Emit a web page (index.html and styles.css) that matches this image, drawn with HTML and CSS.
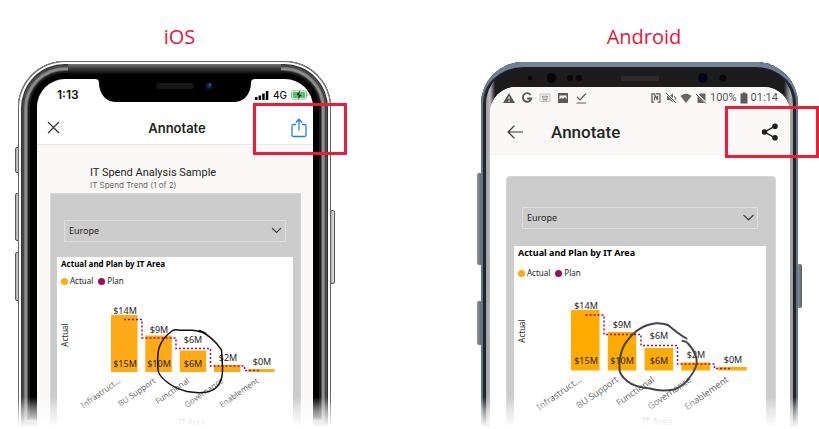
FILE: index.html
```html
<!DOCTYPE html>
<html lang="en">
<head>
<meta charset="utf-8">
<title>Annotate and share</title>
<link rel="stylesheet" href="styles.css">
</head>
<body>
<main class="stage">

  <section class="device ios">
    <h2 class="platform">iOS</h2>
    <div class="phone">
      <i class="key key-left k1"></i><i class="key key-left k2"></i><i class="key key-left k3"></i><i class="key key-right"></i>
      <div class="frame">
        <div class="screen">
          <svg class="notch" width="160" height="26" viewBox="0 0 160 26" aria-hidden="true">
            <path d="M0 0H160V3Q156 3 156 7A16 19 0 0 1 140 26H20A16 19 0 0 1 4 7Q4 3 0 3Z" fill="#000"/>
            <rect x="61" y="7" width="38" height="6" rx="3" fill="#161616"/>
            <circle cx="114" cy="10" r="4" fill="#0c1220"/><circle cx="114" cy="10" r="2" fill="#16305e"/><circle cx="115" cy="8.500" r="1" fill="#4a6fae"/>
          </svg>
          <div class="status">
            <span class="clock">1:13</span>
            <span class="indicators">
              <svg width="14" height="9" viewBox="0 0 14 9" aria-hidden="true"><path d="M0 6h2.500v3H0zM3.600 4.500h2.500V9H3.600zM7.200 2.500h2.500V9H7.200zM10.800 0h2.500v9h-2.500z"/></svg>
              <span>4G</span>
              <svg width="18" height="10" viewBox="0 0 18 10" aria-hidden="true"><rect x=".5" y=".8" width="15" height="8.400" rx="2" fill="#fff" stroke="#a5a5a5"/><rect x="1.800" y="2" width="12.400" height="6" rx="1" fill="#34d158"/><path d="M16.500 3.500v3q1-.4 1-1.500t-1-1.500" fill="#999"/><path d="M9.500 0 4.500 5.500h3L6.500 10l5-5.500h-3z" fill="#000" stroke="#fff" stroke-width=".4"/></svg>
            </span>
          </div>
          <header class="bar">
            <button class="icon" type="button" aria-label="Close"><svg width="13" height="13" viewBox="0 0 13 13"><path d="M1 1l11 11M12 1 1 12" fill="none" stroke="#333" stroke-width="1.200"/></svg></button>
            <h1>Annotate</h1>
            <button class="icon share" type="button" aria-label="Share"><svg width="16" height="20" viewBox="0 0 16 20"><path d="M5 6.500H2.500Q1 6.500 1 8v9q0 1.500 1.500 1.500h11q1.500 0 1.500-1.500V8q0-1.500-1.500-1.500H11M8 12.500V1.500M4.800 4.500 8 1.200l3.200 3.300" fill="none" stroke="#2b80cc" stroke-width="1.300"/></svg></button>
          </header>
          <div class="content">
            <div class="caption"><p class="name">IT Spend Analysis Sample</p><p class="page">IT Spend Trend (1 of 2)</p></div>
            <div class="report">
              <div class="picker">
                <select aria-label="Region"><option>Europe</option></select>
                <svg width="11" height="7" viewBox="0 0 11 7" aria-hidden="true"><path d="M1 1l4.500 4.500L10 1" fill="none" stroke="#444" stroke-width="1.100"/></svg>
              </div>
              <article class="visual">
                <h3>Actual and Plan by IT Area</h3>
                <ul class="legend"><li class="actual">Actual</li><li class="plan">Plan</li></ul>
                <svg class="chart" viewBox="57 290 236 139">
                  <path class="bars" d="M111 315h26.500v57H111zM145.300 335.500h26.500V372h-26.500zM179.700 350.500h26.500V372h-26.500zM214 365h26.500v7H214zM248.200 369h26.500v3h-26.500z"/>
                  <path class="line" d="M124 319.500h18V338h34v10.500h34.500V366h34v4.500H260"/>
                  <g class="values">
                    <text x="125" y="314">$14M</text><text x="159" y="333">$9M</text><text x="193" y="343">$6M</text><text x="228" y="361">$2M</text><text x="262" y="365">$0M</text>
                    <text x="125" y="367">$15M</text><text x="159" y="367">$10M</text><text x="193" y="367">$6M</text>
                    <text class="axis" transform="translate(68 335) rotate(-90)">Actual</text>
                  </g>
                  <g class="areas">
                    <text transform="translate(121 382) rotate(-35)">Infrastruct...</text><text transform="translate(156 382) rotate(-35)">BU Support</text><text transform="translate(190 382) rotate(-35)">Functional</text><text transform="translate(224 382) rotate(-35)">Governance</text><text transform="translate(259 382) rotate(-35)">Enablement</text>
                    <text x="205" y="426">IT Area</text>
                  </g>
                  <path class="ink" d="M206 333.500L199.500 330.500L201 332Q196 330.500 192 330.300T180 330.300Q175 328.800 172 331Q162 338 159 348Q157 355 158 370Q159 376 167 382Q174 388 187 391.500Q198 393.500 207 392Q216 390 219 384Q223 378 222.500 367T221.500 350Q213 337 200 331"/>
                </svg>
              </article>
            </div>
          </div>
        </div>
      </div>
      <i class="highlight"></i>
    </div>
  </section>

  <section class="device android">
    <h2 class="platform">Android</h2>
    <div class="phone">
      <i class="key key-left k1"></i><i class="key key-left k2"></i><i class="key key-right"></i>
      <div class="frame">
        <svg class="sensors" width="136" height="12" viewBox="0 0 136 12" aria-hidden="true">
          <circle cx="5" cy="6" r="2.300" fill="#080808"/><circle cx="26.500" cy="6" r="4.800" fill="#05060b"/><circle cx="45" cy="6" r="3" fill="#080808"/><circle cx="54" cy="6" r="3" fill="#080808"/><rect x="96" y="4" width="38" height="5" rx="2" fill="#2d2d2f"/>
        </svg>
        <svg class="sensors" width="30" height="12" viewBox="0 0 30 12" aria-hidden="true"><circle cx="6" cy="6" r="4.800" fill="#02031c"/><circle cx="26" cy="6" r="3.500" fill="#080808"/></svg>
        <div class="screen">
          <div class="status">
            <span class="indicators notices">
              <svg width="12" height="12" viewBox="0 0 12 12" aria-hidden="true"><path d="M6 1 12 11H0z" fill="#555"/><path d="M6 4.500v3M6 8.500V10" stroke="#f5f5f5" stroke-width="1.100"/></svg>
              <svg width="12" height="12" viewBox="0 0 12 12" aria-hidden="true"><path d="M9.500 2.800A4.300 4.300 0 1 0 10.300 6.500H6.200" fill="none" stroke="#5a5a5a" stroke-width="1.900"/></svg>
              <svg width="12" height="12" viewBox="0 0 12 12" aria-hidden="true"><rect x="1" y="2" width="10" height="7.500" fill="#f3f3f3" stroke="#bbb" stroke-width=".8"/><path d="M3 4.300h6M3 6h6" stroke="#777" stroke-dasharray="1 .3"/><path d="M4 7.800h4" stroke="#777"/></svg>
              <svg width="12" height="12" viewBox="0 0 12 12" aria-hidden="true"><path d="M1 1h10v10H1z" fill="#5a5a5a"/><path d="M2.500 3.500h7v3.500L7.500 5 6 7 4.500 5.500l-2 2z" fill="#fff"/></svg>
              <svg width="12" height="12" viewBox="0 0 12 12" aria-hidden="true"><path d="M2 5l3 3 6-6.500M1.500 11H11" fill="none" stroke="#5a5a5a" stroke-width="1.200"/></svg>
            </span>
            <span class="indicators">
              <svg width="12" height="12" viewBox="0 0 12 12" aria-hidden="true"><path d="M4 10.200H2V1.800H4.200L7.500 8V3.800M5.800 1.800H10V10.200H7.600M4.500 4.500V8.500" fill="none" stroke="#5c5c5c" stroke-width="1.300"/></svg>
              <svg width="12" height="12" viewBox="0 0 12 12" aria-hidden="true"><path d="M2 4h2.500L8 1.500v9L4.500 8H2z" fill="#666"/><path d="M9 4l2.500 3M9 9l2-3" stroke="#666"/><path d="M1.500 1 11 11" stroke="#faf9f8" stroke-width="2"/><path d="M1 1l10 10" stroke="#555"/></svg>
              <svg width="12" height="12" viewBox="0 0 12 12" aria-hidden="true"><path d="M6 11 .5 4Q6-.5 11.500 4z" fill="#666"/></svg>
              <svg width="12" height="12" viewBox="0 0 12 12" aria-hidden="true"><path d="M5 1.500h5.500v9.500h-8V4z" fill="#666"/><path d="M1.700 2 11.500 11.500" stroke="#faf9f8" stroke-width="2"/><path d="M1 2l10 9.500" stroke="#555"/></svg>
              <span>100%</span>
              <svg width="8" height="12" viewBox="0 0 8 12" aria-hidden="true"><path d="M2.500.5h3v1H7.500v10h-7v-10h2z" fill="#5c5c5c"/></svg>
              <span>01:14</span>
            </span>
          </div>
          <header class="bar">
            <button class="icon" type="button" aria-label="Back"><svg width="16" height="14" viewBox="0 0 16 14"><path d="M16 7H1M7.500.6 1.100 7l6.400 6.400" fill="none" stroke="#333" stroke-width="1.200"/></svg></button>
            <h1>Annotate</h1>
            <button class="icon share" type="button" aria-label="Share"><svg width="18" height="18" viewBox="0 0 18 18"><path d="M14 3.200 3.500 9 14 14.800" fill="none" stroke="#222" stroke-width="1.400"/><g fill="#222"><circle cx="14" cy="3.200" r="2.800"/><circle cx="3.500" cy="9" r="2.800"/><circle cx="14" cy="14.800" r="2.800"/></g></svg></button>
          </header>
          <div class="content">
            <div class="report">
              <div class="picker">
                <select aria-label="Region"><option>Europe</option></select>
                <svg width="11" height="7" viewBox="0 0 11 7" aria-hidden="true"><path d="M.5 1l5 4.800 5-4.800" fill="none" stroke="#444" stroke-width="1.200"/></svg>
              </div>
              <article class="visual">
                <h3>Actual and Plan by IT Area</h3>
                <ul class="legend"><li class="actual">Actual</li><li class="plan">Plan</li></ul>
                <svg class="chart" viewBox="514 283 252 146">
                  <path class="bars" d="M571 310h28.500v60.500H571zM607.800 332h28.500v38.500h-28.500zM644.600 348h28.500v22.500h-28.500zM681.400 362.500h28.500v8h-28.500zM718.200 367h28.500v3.500h-28.500z"/>
                  <path class="line" d="M585.500 315H604v19.500h37v11h36.500V364h37v4.500H730"/>
                  <g class="values">
                    <text x="586" y="309">$14M</text><text x="622" y="328">$9M</text><text x="659" y="339">$6M</text><text x="696" y="358">$2M</text><text x="733" y="363">$0M</text>
                    <text x="586" y="364">$15M</text><text x="622" y="364">$10M</text><text x="659" y="364">$6M</text>
                    <text class="axis" transform="translate(525 331) rotate(-90)">Actual</text>
                  </g>
                  <g class="areas">
                    <text transform="translate(582 381) rotate(-35)">Infrastruct...</text><text transform="translate(619 381) rotate(-35)">BU Support</text><text transform="translate(655 381) rotate(-35)">Functional</text><text transform="translate(692 381) rotate(-35)">Governance</text><text transform="translate(729 381) rotate(-35)">Enablement</text>
                    <text x="672" y="425">IT Area</text>
                  </g>
                  <path class="ink" d="M686.500 338.500Q682 336 678 333T668 325Q662 323 656 323.300Q639 325 627 341Q622 347 620 358Q619 364 619.600 371Q621 376 627 381Q634 387 650 388.500Q661 392 674 389.500Q684 386 690 377Q698 367 696.500 358Q694 350 688 343.500Q686 341 682.500 341"/>
                </svg>
              </article>
            </div>
          </div>
        </div>
      </div>
      <i class="highlight"></i>
    </div>
  </section>

</main>
</body>
</html>
```
FILE: styles.css
```css
* { box-sizing: border-box; }
body { margin: 0; background: #fff; overflow: hidden; font-family: "Noto Sans", "Open Sans", sans-serif; color: #252423; }
h1, h2, h3, p, ul { margin: 0; padding: 0; }
svg { display: block; flex: none; }

.stage { display: flex; justify-content: space-between; padding: 0 17px 0 15px; }
.device { position: relative; }
.ios { flex: 0 1 320px; }
.android { flex: 0 1 325px; }
.device::after {
  content: ""; position: absolute; inset: auto 0 0 0; height: 32px;
  background: linear-gradient(rgba(255,255,255,0), rgba(255,255,255,.5) 40%, #fff 94%);
}
.platform { height: 61px; padding-top: 23px; padding-left: 9px; text-align: center; font: 400 20px/27px "Open Sans", sans-serif; color: #e3173e; }
.phone { position: relative; padding: 0 4px 0 3px; }
.frame { position: relative; }
.screen { position: relative; overflow: hidden; background: #fff; }

/* Side buttons on the phone body */
.key { position: absolute; width: 5px; border: 1px solid #555; background: linear-gradient(90deg, #aaa, #e4e4e4); border-radius: 2px; }
.key-left { left: 0; }
.key-right { right: 0; }
.ios .k1 { top: 86px; height: 26px; }
.ios .k2 { top: 132px; height: 48px; }
.ios .k3 { top: 191px; height: 49px; }
.ios .key-right { top: 149px; height: 74px; }
.android .key { border: 0; background: linear-gradient(90deg, #92979c, #5d6166); }
.android .k1 { top: 111px; height: 92px; }
.android .k2 { top: 239px; height: 44px; }
.android .key-right { top: 202px; height: 44px; }

.ios .frame {
  padding: 18px 18px 0 19px;
  border-radius: 47px 47px 0 0;
  background: #000;
  box-shadow: inset 0 0 0 1px #666, inset 0 0 0 3px #fafafa, inset 0 0 0 4px #333, inset 0 0 0 6px #484848, inset 0 0 0 7px #777, inset 0 0 0 9px #8f8f8f, inset 0 0 0 10px #555, inset 0 0 0 12px #1c1c1c;
}
.ios .frame::before { content: ""; position: absolute; inset: 3px 50px auto; height: 11px; background: linear-gradient(#777, #3c3c3c 40%, #000); }
.ios .screen { border-radius: 28px 28px 0 0; }
.android .phone { padding-left: 4px; }
.android .frame {
  margin-top: 1px;
  padding: 25px 8px 0 9px;
  border-radius: 42px 42px 0 0;
  background: linear-gradient(90deg, #777, #bbb 9px, #1c1c1c 14px, #1c1c1c calc(100% - 14px), #aaa calc(100% - 8px), #777);
  box-shadow: inset 0 6px 0 -1px #6d8099, inset 0 0 0 2px #5c7593, inset 0 0 0 5px #22252a;
}
.android .frame::before { content: ""; position: absolute; inset: 0 38px auto; height: 5px; background: #71849c; }
.android .screen { border-radius: 26px 26px 0 0; }
.sensors { position: absolute; top: 10px; left: 44px; }
.sensors + .sensors { left: auto; right: 71px; }

.notch { position: absolute; top: -3px; left: 58px; }
.status { display: flex; justify-content: space-between; align-items: center; }
.indicators { display: flex; align-items: center; gap: 4px; }
.ios .status { height: 32px; padding: 0 4px 0 20px; font: 500 10px/12px Inter, sans-serif; color: #111; }
.ios .clock { font-weight: 600; font-size: 12px; }
.android .status { height: 22px; padding: 0 12px 0 13px; font: 400 11px/14px Roboto, sans-serif; color: #5c5c5c; background: #faf9f8; }
.android .indicators { gap: 3px; }
.android .notices { gap: 6px; }

.bar { display: grid; align-items: center; }
.icon { display: grid; place-items: center; justify-self: start; margin: 0; padding: 0; border: 0; background: none; }
.bar .share { justify-self: end; }
.ios .bar { grid-template-columns: 1fr auto 1fr; height: 34px; padding: 0 6px 0 10px; border-bottom: 1px solid #e6e6e6; }
.ios h1 { font: 600 13px/16px Inter, sans-serif; }
.android .bar { grid-template-columns: 44px 1fr auto; height: 46px; padding: 0 11px 0 17px; background: #faf9f8; border-bottom: 1px solid #f1f0ef; }
.android h1 { font: 500 17px/20px Roboto, sans-serif; }

.ios .content { padding: 21px 12px 0 13px; background: #faf9f8; }
.caption { padding: 0 0 2px 40px; }
.name { font: 400 11px/14px Roboto, sans-serif; }
.page { font: 400 8px/11px Inter, sans-serif; color: #666; }
.android .content { padding: 21px 14px 0 16px; background: #fff; }

.report { background: #ccc; border: 1px solid #d6d6d6; border-bottom: 0; }
.ios .report { padding: 26px 7px 0 6px; }
.android .report { padding: 30px 9px 0 7px; border-radius: 4px 4px 0 0; }
.picker { position: relative; margin: 0 7px 15px; }
.android .picker { margin: 0 8px 17px; }
.picker select { display: block; width: 100%; height: 22px; padding: 0 4px; appearance: none; border: 1px solid #dedede; border-radius: 0; background: transparent; font: 400 9px/20px "Noto Sans", sans-serif; color: #252423; }
.picker svg { position: absolute; top: 7px; right: 4px; }
.visual { background: #fff; }
.visual h3 { padding: 1px 0 0 4px; font: 700 8px/12px "Noto Sans", sans-serif; color: #000; }
.legend { display: flex; gap: 5px; padding: 5px 0 3px 4px; list-style: none; font-size: 8px; line-height: 12px; }
.legend li { display: flex; align-items: center; gap: 2px; }
.legend li::before { content: ""; width: 7px; height: 7px; border-radius: 50%; background: #ffab17; }
.legend .plan::before { background: #99105f; }
.android .visual h3 { font-size: 9px; }
.android .legend { padding: 8px 0 4px 4px; }

.chart { width: 100%; height: auto; font-family: "Noto Sans", sans-serif; font-size: 9px; }
.bars { fill: #ffab17; }
.android .bars { fill: #ffab00; }
.line { fill: none; stroke: #99106c; stroke-width: 1.5px; stroke-dasharray: 2 2; }
.values { fill: #252423; text-anchor: middle; }
.axis { font-size: 8px; }
.areas { fill: #666; text-anchor: end; }
.ios .areas { font-size: 8px; }
.ink { fill: none; stroke: #111; stroke-width: 1.5px; stroke-linecap: round; stroke-linejoin: round; }
.android .ink { stroke: #444; stroke-width: 2px; }

.highlight { position: absolute; top: 42px; right: -12px; width: 94px; height: 52px; border: 3px solid #f01b39; }
.android .highlight { top: 44px; right: -17px; }
```
